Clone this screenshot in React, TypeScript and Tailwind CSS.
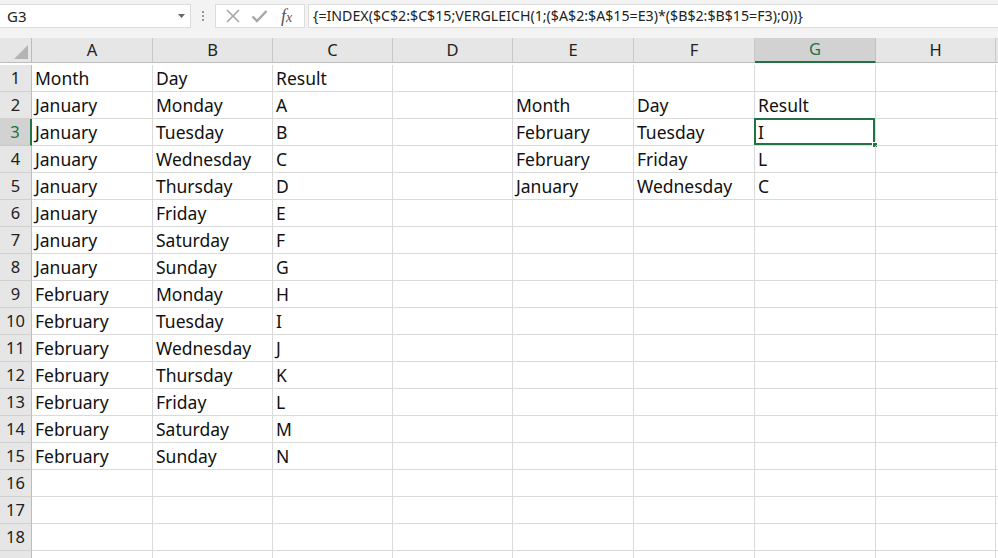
import React from 'react'

const COLS = ['A', 'B', 'C', 'D', 'E', 'F', 'G', 'H', 'I']

const data: Record<string, string> = {
  A1: 'Month', B1: 'Day', C1: 'Result',
  A2: 'January', B2: 'Monday', C2: 'A',
  A3: 'January', B3: 'Tuesday', C3: 'B',
  A4: 'January', B4: 'Wednesday', C4: 'C',
  A5: 'January', B5: 'Thursday', C5: 'D',
  A6: 'January', B6: 'Friday', C6: 'E',
  A7: 'January', B7: 'Saturday', C7: 'F',
  A8: 'January', B8: 'Sunday', C8: 'G',
  A9: 'February', B9: 'Monday', C9: 'H',
  A10: 'February', B10: 'Tuesday', C10: 'I',
  A11: 'February', B11: 'Wednesday', C11: 'J',
  A12: 'February', B12: 'Thursday', C12: 'K',
  A13: 'February', B13: 'Friday', C13: 'L',
  A14: 'February', B14: 'Saturday', C14: 'M',
  A15: 'February', B15: 'Sunday', C15: 'N',
  E2: 'Month', F2: 'Day', G2: 'Result',
  E3: 'February', F3: 'Tuesday', G3: 'I',
  E4: 'February', F4: 'Friday', G4: 'L',
  E5: 'January', F5: 'Wednesday', G5: 'C',
}

const FORMULA = '{=INDEX($C$2:$C$15;VERGLEICH(1;($A$2:$A$15=E3)*($B$2:$B$15=F3);0))}'
// row 19 is only a sliver at the bottom edge
const rows = Array.from({ length: 19 }, (_, i) => i + 1)

function FormulaBar() {
  return (
    <div className="h-[38px] bg-[#f3f3f3] flex items-start pt-[4px]">
      {/* Name box */}
      <div className="h-[24px] w-[191px] bg-white border border-[#dcdcdc] border-l-0 flex items-center justify-between pl-[7px] pr-[5px] text-[15px] text-[#222]">
        <span>G3</span>
        <svg width="7" height="4" viewBox="0 0 7 4"><path d="M0 0h7L3.5 4z" fill="#666" /></svg>
      </div>
      <div className="w-[24px] h-[24px] flex flex-col items-center justify-center gap-[2px]">
        <span className="w-[2px] h-[2px] bg-[#999]" />
        <span className="w-[2px] h-[2px] bg-[#999]" />
        <span className="w-[2px] h-[2px] bg-[#999]" />
      </div>
      {/* Cancel / enter / fx */}
      <div className="h-[24px] w-[90px] bg-white border border-[#dcdcdc] flex items-center pl-[9px] gap-[10px]">
        <svg width="16" height="16" viewBox="0 0 16 16"><path d="M2 2l12 12M14 2L2 14" stroke="#a6a6a6" strokeWidth="1.6" fill="none" /></svg>
        <svg width="17" height="16" viewBox="0 0 17 16"><path d="M1.5 8.5l4.5 4.5L15.5 3" stroke="#a6a6a6" strokeWidth="2.4" fill="none" /></svg>
        <span className="text-[18px] italic text-[#555] leading-none ml-[3px]" style={{ fontFamily: '"Liberation Serif", serif' }}>
          f<span className="text-[14px]">x</span>
        </span>
      </div>
      <div className="ml-[3px] h-[24px] flex-1 bg-white border border-[#dcdcdc] border-r-0 flex items-center pl-[4px] text-[14.2px] text-[#222] whitespace-nowrap overflow-hidden">
        {FORMULA}
      </div>
    </div>
  )
}

export default function App() {
  return (
    <div className="w-[998px] h-[558px] overflow-hidden bg-white" style={{ fontFamily: '"Noto Sans", Lato, sans-serif' }}>
      <FormulaBar />
      <div className="grid grid-cols-[32px_121px_120px_120px_120px_121px_121px_121px_120px_120px] auto-rows-[27px]">
        {/* Corner */}
        <div className="h-[25px] bg-[#e6e6e6] border-r border-b border-[#bcbcbc] relative">
          <svg className="absolute right-[3px] bottom-[3px]" width="14" height="14" viewBox="0 0 14 14"><path d="M14 0V14H0z" fill="#b4b4b4" /></svg>
        </div>
        {COLS.map((c) => {
          const sel = c === 'G'
          return (
            <div
              key={c}
              className={
                sel
                  ? 'h-[25px] bg-[#d2d2d2] border-r border-[#c0c0c0] border-b-2 border-b-[#217346] flex items-center justify-center text-[16.5px] text-[#217346]'
                  : 'h-[25px] bg-[#e6e6e6] border-r border-[#c8c8c8] border-b border-b-[#bcbcbc] flex items-center justify-center text-[16.5px] text-[#222]'
              }
            >
              {c === 'I' ? '' : c}
            </div>
          )
        })}
        {rows.map((r) => (
          <React.Fragment key={r}>
            <div
              className={
                r === 3
                  ? 'bg-[#d2d2d2] border-r-2 border-r-[#217346] border-b border-[#c8c8c8] flex items-center justify-center pt-[1px] text-[16.5px] text-[#217346]'
                  : 'bg-[#e6e6e6] border-r border-r-[#bcbcbc] border-b border-[#d0d0d0] flex items-center justify-center pt-[1px] text-[16.5px] text-[#222]'
              }
            >
              {r < 19 ? r : ''}
            </div>
            {COLS.map((c) => {
              const id = `${c}${r}`
              const active = id === 'G3'
              return (
                <div key={id} className="relative border-r border-b border-[#dadada] flex items-center pl-[3px] pt-[1px] text-[17.5px] text-[#111] whitespace-nowrap">
                  {data[id]}
                  {active && (
                    <>
                      <div className="absolute -left-[1px] -top-[1px] right-0 bottom-0 border-2 border-[#217346]" />
                      <div className="absolute -right-[3px] -bottom-[3px] w-[6px] h-[6px] bg-[#217346] border border-white" />
                    </>
                  )}
                </div>
              )
            })}
          </React.Fragment>
        ))}
      </div>
    </div>
  )
}
